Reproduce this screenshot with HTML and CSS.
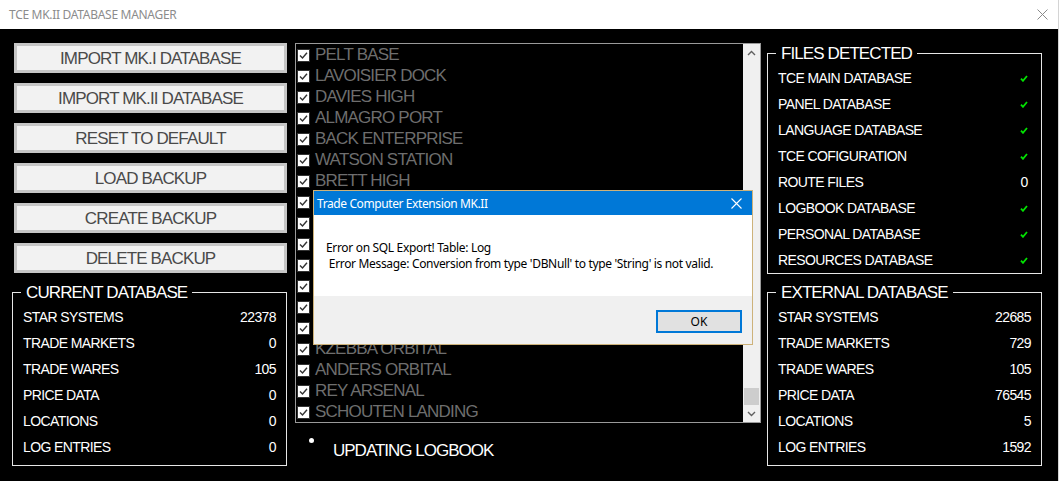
FILE: index.html
```html
<!DOCTYPE html>
<html lang="en">
<head>
<meta charset="utf-8">
<title>TCE MK.II DATABASE MANAGER</title>
<link rel="stylesheet" href="styles.css">
</head>
<body>
<div class="window">
  <header class="titlebar">
    <span class="title">TCE MK.II DATABASE MANAGER</span>
    <svg class="win-close" width="11" height="11" viewBox="0 0 11 11"><path d="M0.5 0.5 L10.5 10.5 M10.5 0.5 L0.5 10.5" stroke="#8a8a8a" stroke-width="1" fill="none"/></svg>
  </header>

  <main class="client">
    <section class="col-left">
      <div class="buttons">
        <button class="btn">IMPORT MK.I DATABASE</button>
        <button class="btn">IMPORT MK.II DATABASE</button>
        <button class="btn">RESET TO DEFAULT</button>
        <button class="btn">LOAD BACKUP</button>
        <button class="btn">CREATE BACKUP</button>
        <button class="btn">DELETE BACKUP</button>
      </div>
      <fieldset class="group group-bottom">
        <legend>CURRENT DATABASE</legend>
        <div class="row"><span>STAR SYSTEMS</span><span>22378</span></div>
        <div class="row"><span>TRADE MARKETS</span><span>0</span></div>
        <div class="row"><span>TRADE WARES</span><span>105</span></div>
        <div class="row"><span>PRICE DATA</span><span>0</span></div>
        <div class="row"><span>LOCATIONS</span><span>0</span></div>
        <div class="row"><span>LOG ENTRIES</span><span>0</span></div>
      </fieldset>
    </section>

    <section class="col-mid">
      <div class="listbox">
        <ul class="items">
          <li><span class="cb"></span>PELT BASE</li>
          <li><span class="cb"></span>LAVOISIER DOCK</li>
          <li><span class="cb"></span>DAVIES HIGH</li>
          <li><span class="cb"></span>ALMAGRO PORT</li>
          <li><span class="cb"></span>BACK ENTERPRISE</li>
          <li><span class="cb"></span>WATSON STATION</li>
          <li><span class="cb"></span>BRETT HIGH</li>
          <li><span class="cb"></span>OBERTH GATEWAY</li>
          <li><span class="cb"></span>HUBBLE TERMINAL</li>
          <li><span class="cb"></span>KEPLER DOCK</li>
          <li><span class="cb"></span>MAYER OUTPOST</li>
          <li><span class="cb"></span>GALLE HUB</li>
          <li><span class="cb"></span>PIAZZI STATION</li>
          <li><span class="cb"></span>HALLEY PORT</li>
          <li><span class="cb"></span>KZEBBA ORBITAL</li>
          <li><span class="cb"></span>ANDERS ORBITAL</li>
          <li><span class="cb"></span>REY ARSENAL</li>
          <li><span class="cb"></span>SCHOUTEN LANDING</li>
        </ul>
        <div class="scrollbar">
          <div class="sb-btn"><svg width="9" height="6" viewBox="0 0 9 6"><path d="M1 5 L4.5 1.5 L8 5" stroke="#606060" stroke-width="1.4" fill="none"/></svg></div>
          <div class="sb-track"><div class="sb-thumb"></div></div>
          <div class="sb-btn"><svg width="9" height="6" viewBox="0 0 9 6"><path d="M1 1 L4.5 4.5 L8 1" stroke="#606060" stroke-width="1.4" fill="none"/></svg></div>
        </div>
      </div>
      <div class="status">
        <span class="dot"></span>
        <span class="status-text">UPDATING LOGBOOK</span>
      </div>
    </section>

    <section class="col-right">
      <fieldset class="group files">
        <legend>FILES DETECTED</legend>
        <div class="row"><span>TCE MAIN DATABASE</span><span class="flag"><svg class="ok" width="8" height="7" viewBox="0 0 8 7"><path d="M1 3.6 L3 5.8 L7 1" stroke="#00e400" stroke-width="1.8" fill="none"/></svg></span></div>
        <div class="row"><span>PANEL DATABASE</span><span class="flag"><svg class="ok" width="8" height="7" viewBox="0 0 8 7"><path d="M1 3.6 L3 5.8 L7 1" stroke="#00e400" stroke-width="1.8" fill="none"/></svg></span></div>
        <div class="row"><span>LANGUAGE DATABASE</span><span class="flag"><svg class="ok" width="8" height="7" viewBox="0 0 8 7"><path d="M1 3.6 L3 5.8 L7 1" stroke="#00e400" stroke-width="1.8" fill="none"/></svg></span></div>
        <div class="row"><span>TCE COFIGURATION</span><span class="flag"><svg class="ok" width="8" height="7" viewBox="0 0 8 7"><path d="M1 3.6 L3 5.8 L7 1" stroke="#00e400" stroke-width="1.8" fill="none"/></svg></span></div>
        <div class="row"><span>ROUTE FILES</span><span class="flag">0</span></div>
        <div class="row"><span>LOGBOOK DATABASE</span><span class="flag"><svg class="ok" width="8" height="7" viewBox="0 0 8 7"><path d="M1 3.6 L3 5.8 L7 1" stroke="#00e400" stroke-width="1.8" fill="none"/></svg></span></div>
        <div class="row"><span>PERSONAL DATABASE</span><span class="flag"><svg class="ok" width="8" height="7" viewBox="0 0 8 7"><path d="M1 3.6 L3 5.8 L7 1" stroke="#00e400" stroke-width="1.8" fill="none"/></svg></span></div>
        <div class="row"><span>RESOURCES DATABASE</span><span class="flag"><svg class="ok" width="8" height="7" viewBox="0 0 8 7"><path d="M1 3.6 L3 5.8 L7 1" stroke="#00e400" stroke-width="1.8" fill="none"/></svg></span></div>
      </fieldset>
      <fieldset class="group group-bottom external">
        <legend>EXTERNAL DATABASE</legend>
        <div class="row"><span>STAR SYSTEMS</span><span>22685</span></div>
        <div class="row"><span>TRADE MARKETS</span><span>729</span></div>
        <div class="row"><span>TRADE WARES</span><span>105</span></div>
        <div class="row"><span>PRICE DATA</span><span>76545</span></div>
        <div class="row"><span>LOCATIONS</span><span>5</span></div>
        <div class="row"><span>LOG ENTRIES</span><span>1592</span></div>
      </fieldset>
    </section>
  </main>

  <div class="dialog">
    <div class="dlg-title">
      <span>Trade Computer Extension MK.II</span>
      <svg width="11" height="11" viewBox="0 0 11 11"><path d="M0.5 0.5 L10.5 10.5 M10.5 0.5 L0.5 10.5" stroke="#ffffff" stroke-width="1.1" fill="none"/></svg>
    </div>
    <div class="dlg-body"><p class="msg">Error on SQL Export! Table: Log
 Error Message: Conversion from type 'DBNull' to type 'String' is not valid.</p></div>
    <div class="dlg-foot"><button class="dlg-ok">OK</button></div>
  </div>
</div>
</body>
</html>
```

FILE: styles.css
```css
* { box-sizing: border-box; }

html, body {
  margin: 0;
  padding: 0;
  background: #000;
}

body {
  width: 1059px;
  height: 481px;
  overflow: hidden;
  font-family: "Liberation Sans", Arial, sans-serif;
}

.window {
  position: relative;
  width: 1059px;
  height: 481px;
  background: #000;
  border-right: 1px solid #d4d4d4;
}

.titlebar {
  height: 29px;
  background: #fff;
  display: flex;
  align-items: center;
  justify-content: space-between;
  padding: 0 10px 1px 9px;
}

.title {
  font-family: "Noto Sans", "Open Sans", sans-serif;
  font-size: 12px;
  color: #8c8c8c;
  letter-spacing: -0.3px;
}

.win-close { display: block; }

.client {
  display: flex;
  padding: 14px 0 0 12px;
}

/* left column */
.col-left {
  width: 275px;
  display: flex;
  flex-direction: column;
}

.buttons {
  display: flex;
  flex-direction: column;
  gap: 10px;
  padding-left: 2px;
}

.btn {
  width: 273px;
  height: 30px;
  margin: 0;
  padding: 1px 0 0 0;
  border: 3px solid #c6c6c6;
  background: #f2f2f2;
  color: #4a4a4a;
  font-family: "Liberation Sans", Arial, sans-serif;
  font-size: 17px;
  letter-spacing: -0.85px;
  line-height: 23px;
  text-align: center;
}

.group {
  margin: 0;
  padding: 1px 10px 0 10px;
  border: 1px solid #e6e6e6;
  min-width: 0;
  color: #fff;
}

.group legend {
  font-size: 17px;
  letter-spacing: -0.9px;
  line-height: 21px;
  padding: 0 5px;
  margin-left: -2px;
  color: #fff;
}

.group-bottom {
  margin-top: 9px;
  padding-bottom: 5px;
}

.row {
  display: flex;
  justify-content: space-between;
  align-items: center;
  height: 26px;
  font-size: 14px;
  letter-spacing: -0.6px;
  color: #fff;
}

/* middle column */
.col-mid {
  width: 466px;
  margin-left: 8px;
  display: flex;
  flex-direction: column;
}

.listbox {
  height: 380px;
  border: 1px solid #9a9a9a;
  display: flex;
  background: #000;
}

.items {
  flex: 1;
  list-style: none;
  margin: 0;
  padding: 0;
  overflow: hidden;
}

.items li {
  height: 21px;
  display: flex;
  align-items: center;
  padding-left: 1px;
  font-size: 17px;
  letter-spacing: -0.8px;
  color: #6e6e6e;
  white-space: nowrap;
  line-height: 19px;
}

.cb {
  width: 13px;
  height: 13px;
  flex: none;
  margin-right: 5px;
  margin-top: 2px;
  background: #fff url("data:image/svg+xml;utf8,<svg xmlns='http://www.w3.org/2000/svg' width='13' height='13' viewBox='0 0 13 13'><rect x='0.5' y='0.5' width='12' height='12' fill='white' stroke='%23333333'/><path d='M3 6.5 L5.5 9 L10 3.8' stroke='%23333333' stroke-width='1.4' fill='none'/></svg>") no-repeat;
}

.scrollbar {
  width: 17px;
  flex: none;
  background: #f0f0f0;
  display: flex;
  flex-direction: column;
}

.sb-btn {
  height: 17px;
  display: flex;
  align-items: center;
  justify-content: center;
}

.sb-track {
  flex: 1;
  display: flex;
  flex-direction: column;
  justify-content: flex-end;
}

.sb-thumb {
  height: 17px;
  margin: 0 1px;
  background: #cdcdcd;
}

.status {
  display: flex;
  align-items: flex-start;
  padding: 15px 0 0 14px;
}

.dot {
  width: 5px;
  height: 5px;
  border-radius: 50%;
  background: #fff;
  flex: none;
}

.status-text {
  margin: 3px 0 0 19px;
  font-size: 17px;
  letter-spacing: -1px;
  line-height: 20px;
  color: #fff;
}

/* right column */
.col-right {
  width: 275px;
  margin-left: 6px;
  display: flex;
  flex-direction: column;
}

.files {
  padding-bottom: 0;
}

.external {
  margin-top: 8px;
}

.flag {
  width: 14px;
  text-align: center;
  display: flex;
  justify-content: center;
  align-items: center;
}

.ok { display: block; }

/* dialog window */
.dialog {
  position: absolute;
  left: 313px;
  top: 190px;
  width: 440px;
  height: 155px;
  border: 1px solid #cdb27a;
  background: #fff;
  display: flex;
  flex-direction: column;
  font-family: "Noto Sans", "Open Sans", sans-serif;
  font-size: 12px;
  color: #000;
}

.dlg-title {
  height: 24px;
  background: #0078d7;
  color: #fff;
  display: flex;
  align-items: center;
  justify-content: space-between;
  padding: 0 10px 0 3px;
  letter-spacing: -0.4px;
}

.dlg-body {
  height: 81px;
  background: #fff;
  padding: 25px 0 0 12px;
}

.msg {
  margin: 0;
  white-space: pre;
  line-height: 16px;
  letter-spacing: -0.33px;
}

.dlg-foot {
  flex: 1;
  background: #f0f0f0;
  display: flex;
  justify-content: flex-end;
  align-items: flex-start;
  padding: 14px 10px 0 0;
}

.dlg-ok {
  width: 86px;
  height: 23px;
  margin: 0;
  padding: 0;
  border: 2px solid #0078d7;
  background: #e1e1e1;
  font-family: "Noto Sans", "Open Sans", sans-serif;
  font-size: 12px;
  color: #000;
}
```
